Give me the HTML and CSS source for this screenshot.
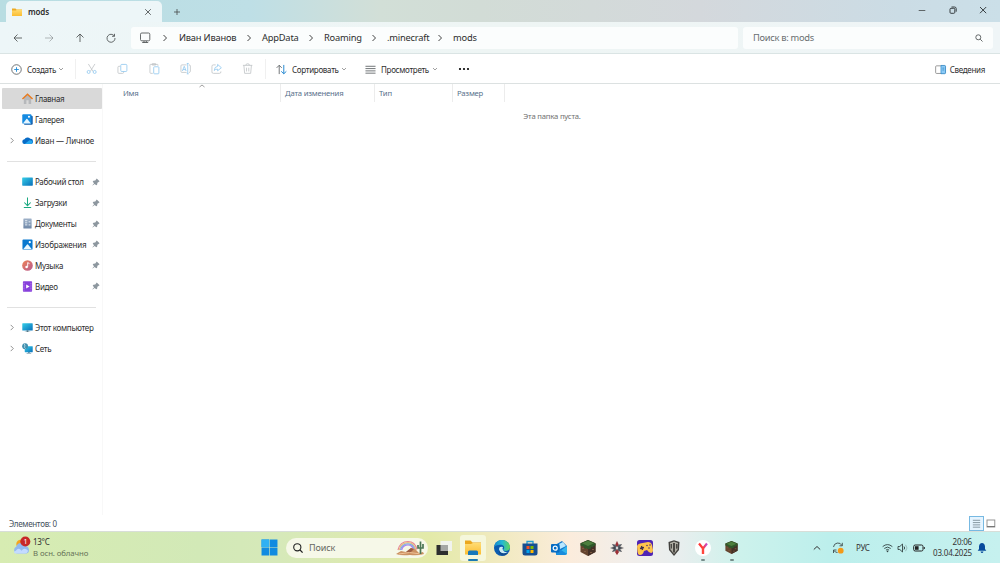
FILE: index.html
```html
<!DOCTYPE html>
<html lang="ru">
<head>
<meta charset="utf-8">
<title>mods</title>
<link rel="stylesheet" href="styles.css">
</head>
<body>
<svg width="0" height="0" class="defs">
  <defs>
    <linearGradient id="blue" x1="0" y1="0" x2="1" y2="1"><stop offset="0" stop-color="#36cfe8"/><stop offset="1" stop-color="#086fba"/></linearGradient>
    <linearGradient id="folder" x1="0" y1="0" x2="0" y2="1"><stop offset="0" stop-color="#ffdc73"/><stop offset="1" stop-color="#fbbd32"/></linearGradient>
    <linearGradient id="doc" x1="0" y1="0" x2="0" y2="1"><stop offset="0" stop-color="#9fb2c9"/><stop offset="1" stop-color="#6f88a8"/></linearGradient>
    <linearGradient id="music" x1="0" y1="0" x2="1" y2="1"><stop offset="0" stop-color="#ef8354"/><stop offset="1" stop-color="#b75b91"/></linearGradient>
    <linearGradient id="edge" x1="0" y1="0" x2="1" y2="0"><stop offset="0" stop-color="#1389ce"/><stop offset=".5" stop-color="#25b8d4"/><stop offset="1" stop-color="#61d657"/></linearGradient>
    <linearGradient id="ya" x1="0" y1="0" x2="1" y2="0"><stop offset="0" stop-color="#ff3434"/><stop offset=".5" stop-color="#ff3e38"/><stop offset="1" stop-color="#c14cd8"/></linearGradient>
    <symbol id="chev" viewBox="0 0 6 8"><path d="M1.500 1 4.500 4 1.500 7" fill="none" stroke="currentColor" stroke-width=".9"/></symbol>
    <symbol id="down" viewBox="0 0 6 4"><path d="M1 1 3 3 5 1" fill="none" stroke="currentColor" stroke-width=".7"/></symbol>
    <symbol id="pin" viewBox="0 0 8 8"><path d="M4.700.5 7.600 3.300l-1 .8-1.200.7-.3 1.900-.9.600-1.500-1.400L.6 7.600l-.2-.4 1.700-2L.7 3.700l.7-.9 1.900-.2z" fill="#8d979f"/></symbol>
    <symbol id="pic" viewBox="0 0 12 12"><rect x=".5" y=".5" width="11" height="11" rx="1" fill="#0878cf"/><path d="m1.500 11 4-5q.5-.6 1 0l4 5z" fill="#e9f8ff"/><circle cx="8.500" cy="3.500" r="1.200" fill="#fff"/></symbol>
    <symbol id="block" viewBox="0 0 16 16"><path d="m8 0 7.500 3.200v8.700L8 16 .5 11.900V3.200z" fill="#65442f"/><path d="M8 7.500V16l7.500-4.100V4z" fill="#443027"/><path d="m8 0 7.500 3.200v2L13 6.500v1l-2-.7v1.600L8 9.200 6 8v1L4 7.700V6.800L.5 5.400V3.200z" fill="#30572a"/><path d="m8 .8 6 2.500L8 6.100 2 3.300z" fill="#4c7e3d"/><path d="M2 8h2v1H2zm2 3h2v1H4zm6 1h2v1h-2zm2-3h2v1h-2z" fill="#7e5941"/></symbol>
  </defs>
</svg>
<div class="window">
  <header class="titlebar">
    <div class="tab">
      <svg class="tab-folder" viewBox="0 0 12 10"><path d="M1 1.500h3.500l1 1H11V9H1z" fill="#eda923"/><path d="M1 3.500h4l1-1h5V9H1z" fill="url(#folder)"/></svg>
      <span class="tab-title">mods</span>
      <svg class="tab-close" viewBox="0 0 8 8"><path d="m1.200 1.200 5.600 5.600m0-5.600L1.200 6.800" class="line"/></svg>
    </div>
    <svg class="plus" viewBox="0 0 8 8"><path d="M4 1v6M1 4h6" class="line"/></svg>
    <div class="controls">
      <svg viewBox="0 0 10 10"><path d="M1.700 5.500h6.600" class="line"/></svg>
      <svg viewBox="0 0 10 10"><rect x="2" y="3.300" width="4.800" height="5" rx="1" class="dark"/><path d="M3.500 2h3q1.700 0 1.700 1.700v3" class="dark"/></svg>
      <svg viewBox="0 0 10 10"><path d="m2 2 6.200 6.200m0-6.200L2 8.200" class="dark"/></svg>
    </div>
  </header>

  <div class="address">
    <nav class="navbuttons">
      <svg viewBox="0 0 10 10"><path d="M9 5H1m3.500-3.500L1 5l3.500 3.500" class="line"/></svg>
      <svg class="faded" viewBox="0 0 10 10"><path d="M1 5h8M5.500 1.500 9 5 5.500 8.500" class="line"/></svg>
      <svg viewBox="0 0 10 10"><path d="M5 9V1M1.500 4.500 5 1l3.500 3.500" class="line"/></svg>
      <svg viewBox="0 0 10 10"><path d="M8.300 3A4 4 0 1 0 9 5M8.500.8v2.500H6" class="line"/></svg>
    </nav>
    <div class="crumbs">
      <svg class="monitor" viewBox="0 0 12 12"><rect x="1.500" y="1" width="9.300" height="7.800" rx="1.300" class="line"/><path d="M3.200 10.500h6M5 9v1.500M7.300 9v1.500" class="line"/></svg>
      <svg class="chev c1"><use href="#chev"/></svg><span class="w-ivan">Иван Иванов</span>
      <svg class="chev"><use href="#chev"/></svg><span class="w-app">AppData</span>
      <svg class="chev"><use href="#chev"/></svg><span class="w-roam">Roaming</span>
      <svg class="chev"><use href="#chev"/></svg><span class="w-mine">.minecraft</span>
      <svg class="chev"><use href="#chev"/></svg><span>mods</span>
    </div>
    <div class="search"><span>Поиск в: mods</span><svg viewBox="0 0 8 8"><circle cx="3.300" cy="3.300" r="2.500" class="line"/><path d="m5.200 5.200 2.300 2.300" class="line"/></svg></div>
  </div>

  <div class="toolbar">
    <div class="tool create"><svg class="i11" viewBox="0 0 12 12"><circle cx="6" cy="6" r="5.200" class="line"/><path d="M6 3.500v5M3.500 6h5" stroke="#218bd5" fill="none"/></svg><span>Создать</span><svg class="down"><use href="#down"/></svg></div>
    <div class="actions">
      <svg viewBox="0 0 12 12"><path d="m2.500 1 5 8M9.500 1l-5 8" class="grayline"/><circle cx="2.800" cy="9.500" r="1.600" class="blueline"/><circle cx="9.200" cy="9.500" r="1.600" class="blueline"/></svg>
      <svg viewBox="0 0 12 12"><path d="M3.500 3.500H2q-1 0-1 1V10q0 1 1 1h4q1 0 1-1V9" class="grayline"/><rect x="4" y="1.500" width="6.500" height="7.500" rx="1" class="blueline"/></svg>
      <svg viewBox="0 0 12 12"><path d="M4 11H2q-1 0-1-1V2q0-.5.500-.5H9q.500 0 .5.500v1M3.500.7H7v1.500H3.500z" class="grayline"/><rect x="5" y="4" width="5.500" height="7.500" rx=".8" class="blueline"/></svg>
      <svg viewBox="0 0 12 12"><path d="M7 2H2Q1 2 1 3v6q0 1 1 1h5M9.500 2q1.500 0 1.500 1v6q0 1-1.500 1" class="grayline"/><path d="m2.500 8.500 2-5 2 5M3.200 7h2.600M8.200.5v11M7.200.5h2M7.200 11.500h2" class="blueline"/></svg>
      <svg viewBox="0 0 12 12"><path d="M5 2H2.500Q1 2 1 3.500v6Q1 11 2.500 11H9q1.500 0 1.500-1.500V9" class="grayline"/><path d="M7 1.500 11 5 7 8.300V6.500Q4.500 6.500 3.500 8 3.500 4 7 3.500z" class="blueline"/></svg>
      <svg viewBox="0 0 12 12"><path d="M1 2.500h10M4 2.500Q4 .8 6 .8t2 1.700M2 2.500l.8 8.500h6.400l.8-8.500M4.800 5v4M7.200 5v4" class="grayline"/></svg>
    </div>
    <div class="tool sort"><svg class="i11" viewBox="0 0 12 12"><path d="M3.500 11V1.500M.7 4.200l2.800-2.800 2.800 2.800" class="line"/><path d="M8.500 1v9.500M5.700 8l2.800 2.700L11.300 8" stroke="#1680ce" fill="none"/></svg><span>Сортировать</span><svg class="down"><use href="#down"/></svg></div>
    <div class="tool view"><svg class="i11" viewBox="0 0 12 12"><path d="M.5 2.500h11M.5 5h11M.5 7.500h11M.5 10h11" class="line"/></svg><span>Просмотреть</span><svg class="down"><use href="#down"/></svg></div>
    <svg class="more" viewBox="0 0 12 4"><circle cx="2" cy="2" r="1.100"/><circle cx="6" cy="2" r="1.100"/><circle cx="10" cy="2" r="1.100"/></svg>
    <div class="tool details"><svg class="i11" viewBox="0 0 12 12"><rect x=".7" y="2" width="10.600" height="8.300" rx="1" fill="#fff" stroke="#777" stroke-width=".8"/><path d="M6.500 1.600h4q1 0 1 1v7q0 1-1 1h-4z" fill="#8bcaf6" stroke="#1d80c7" stroke-width=".7"/><path d="M8 4.500h2M8 6.500h2" stroke="#287fb8" stroke-width=".7"/></svg><span>Сведения</span></div>
  </div>

  <div class="main">
    <aside class="sidebar">
      <div class="side selected"><svg class="arrow"></svg><svg class="sic" viewBox="0 0 12 12"><path d="M2 5v7h2.800V8h2.400v4H10V5L6 1.500z" fill="#b6b8bb"/><path d="m.5 6.500 5.500-5.200 5.500 5.200" fill="none" stroke="#e87b20" stroke-width="1.600"/></svg><span>Главная</span></div>
      <div class="side"><svg class="arrow"></svg><svg class="sic" viewBox="0 0 12 12"><rect x="2" y="1.800" width="9.700" height="10" rx="1.200" fill="#155ba5"/><rect x=".3" y=".3" width="10" height="10.300" rx="1" fill="#168be1"/><path d="m1 10.300 3.800-4.800q.5-.5 1 0l3.900 4.800z" fill="#e6f6ff"/><circle cx="7.600" cy="3" r="1.100" fill="#fff"/></svg><span>Галерея</span></div>
      <div class="side"><svg class="arrow"><use href="#chev"/></svg><svg class="sic" viewBox="0 0 12 12"><path d="M3 9.800a2.500 2.500 0 0 1-.3-5.100A3.800 3.800 0 0 1 9 4.200a2.800 2.800 0 0 1 .5 5.600z" fill="#086bc6"/><path d="M3 9.800 8 5.800q3-.7 3.700 1.700-.2 2.300-2.200 2.300z" fill="#28a8ef"/></svg><span class="personal">Иван — Личное</span></div>
      <hr>
      <div class="side"><svg class="arrow"></svg><svg class="sic" viewBox="0 0 12 12"><rect x=".2" y="1.500" width="11.600" height="9" rx=".6" fill="url(#blue)"/></svg><span>Рабочий стол</span><svg class="pin"><use href="#pin"/></svg></div>
      <div class="side"><svg class="arrow"></svg><svg class="sic" viewBox="0 0 12 12"><path d="M6 .5v9M2.500 6 6 9.500 9.500 6M2 11.500h8" fill="none" stroke="#1aa980" stroke-width="1.100"/></svg><span>Загрузки</span><svg class="pin"><use href="#pin"/></svg></div>
      <div class="side"><svg class="arrow"></svg><svg class="sic" viewBox="0 0 12 12"><rect x="1.500" y=".5" width="9" height="11" rx=".6" fill="url(#doc)"/><path d="M3.300 3h2.500M3.300 5.300h2.500M3.300 7.500h2.500M7.200 4.200h2M7.200 7.500h2" stroke="#eef4fb"/></svg><span>Документы</span><svg class="pin"><use href="#pin"/></svg></div>
      <div class="side"><svg class="arrow"></svg><svg class="sic"><use href="#pic"/></svg><span class="images">Изображения</span><svg class="pin"><use href="#pin"/></svg></div>
      <div class="side"><svg class="arrow"></svg><svg class="sic" viewBox="0 0 12 12"><circle cx="6" cy="6" r="5.800" fill="url(#music)"/><path d="M6.200 7.500V2.800l2 1.200" fill="none" stroke="#fff"/><circle cx="5" cy="7.700" r="1.400" fill="#fff"/></svg><span>Музыка</span><svg class="pin"><use href="#pin"/></svg></div>
      <div class="side"><svg class="arrow"></svg><svg class="sic" viewBox="0 0 12 12"><rect x="1" y=".4" width="10" height="11.200" rx=".8" fill="#8740db"/><path d="m4.600 3.700 3.700 2.300-3.700 2.300z" fill="#fff"/><path d="M2.200 2v8.500M9.800 2v8.500" stroke="#c99bf7" stroke-dasharray="1 1"/></svg><span>Видео</span><svg class="pin"><use href="#pin"/></svg></div>
      <hr>
      <div class="side"><svg class="arrow"><use href="#chev"/></svg><svg class="sic" viewBox="0 0 12 12"><rect x=".3" y="1.300" width="11.400" height="8" rx=".6" fill="url(#blue)"/><path d="M5 9h2v1.500h2v.5H3v-.5h2z" fill="#557b8c"/></svg><span class="pc">Этот компьютер</span></div>
      <div class="side"><svg class="arrow"><use href="#chev"/></svg><svg class="sic" viewBox="0 0 12 12"><rect x="3" y="3.500" width="8.700" height="6.500" rx=".4" fill="url(#blue)"/><path d="M6.500 10h2v1h1.500v.5H5V11h1.500z" fill="#477891"/><circle cx="3.400" cy="3.500" r="3.200" fill="#418fae"/><path d="M2 1q2 1 1 2.500T4 6" fill="none" stroke="#b8dae4"/></svg><span>Сеть</span></div>
    </aside>
    <section class="files">
      <div class="columns"><div class="col name">Имя<svg class="sortmark" viewBox="0 0 6 4"><path d="m.5 3 2.500-2 2.500 2" fill="none" stroke="#777" stroke-width=".7"/></svg></div><div class="col date">Дата изменения</div><div class="col type">Тип</div><div class="col size">Размер</div></div>
      <p class="empty">Эта папка пуста.</p>
    </section>
  </div>
  <footer class="status"><span>Элементов: 0</span><div class="modes"><div class="mode active"><svg viewBox="0 0 12 12"><path d="M2 2.500h8M2 5h8M2 7.500h8M2 10h8" stroke="#667782" stroke-width=".8"/></svg></div><svg class="large" viewBox="0 0 10 10"><rect x="1" y="1" width="7.800" height="7" fill="#fff" stroke="#8b8b8b" stroke-width=".9"/><path d="M1 7.500h8" stroke="#777"/></svg></div></footer>
</div>

<div class="taskbar">
  <div class="weather"><svg viewBox="0 0 20 20"><circle cx="9" cy="8" r="4.500" fill="#f5a51d"/><path d="M5 18a4 4 0 0 1-.4-7.500A5 5 0 0 1 14 10a4.100 4.100 0 0 1 1 8z" fill="#91b9ef"/><path d="M4 15q3-4 6 0 3-4 7 0-1 3-3 3H5q-3 0-3-2z" fill="#c3dbff"/><circle cx="14" cy="5.200" r="5.300" fill="#c72828"/><text x="14" y="8" text-anchor="middle" fill="#fff" font-size="7.500">1</text></svg><div><b>13°C</b><span>В осн. облачно</span></div></div>
  <div class="apps">
    <svg class="start" viewBox="0 0 16 16"><path d="M.5.500h7.200v7.200H.5zM8.300.500h7.200v7.200H8.300zM.5 8.300h7.200v7.200H.5zM8.300 8.300h7.200v7.200H8.300z" fill="#108be0"/><path d="M.5.500h7.200v7.200H.5z" fill="#2eb1f3"/></svg>
    <div class="tasksearch"><svg viewBox="0 0 10 10"><circle cx="4.300" cy="4.300" r="3.600" fill="none" stroke="#222" stroke-width="1.100"/><path d="m6.800 6.800 2.800 2.800" stroke="#222" stroke-width="1.300"/></svg><span>Поиск</span><svg class="rainbow" viewBox="0 0 30 18"><g fill="none" stroke-width="1.200"><path d="M3 11Q5 2.500 13 2.500q7 0 9 8" stroke="#e78594"/><path d="M4.200 11Q6 3.700 13 3.700q6 0 8 8" stroke="#e7bd7d"/><path d="M5.400 11Q7 4.900 13 4.900q5.500 0 7 7" stroke="#79afe9"/><path d="M6.600 11Q8 6 13 6q4.500 0 6 6" stroke="#a67ded"/></g><path d="M1 15 6 12l5 1 5-4 4 1 4 4 4-1 1 2q-6 2-14 1-9 1-14-1z" fill="#cc9262"/><path d="m11 13 5-4 3 1-4 4z" fill="#9b5d43"/><path d="M4 15q10-3 22 0" fill="none" stroke="#efc298"/><path d="M25.500 15V2.500M23 6v3h2.500M28 5v4h-2.500" fill="none" stroke="#4a7654" stroke-width="1.700"/></svg></div>
    <div class="slot"><svg viewBox="0 0 16 16"><path d="M4.500 1H16v10H4.500z" fill="#f1f3ee"/><path d="M.5 5H12v10H.5z" fill="#2c2e2e"/><path d="M4.500 5H12v6H4.500z" fill="#a5a7a5"/></svg></div>
    <div class="slot current"><svg viewBox="0 0 16 16"><path d="M0 .5h5.500l2 2H16V14H0z" fill="#eba71e"/><path d="M0 4h6l2-1h8v11.500H0z" fill="url(#folder)"/><path d="M3 12q0-1.500 1.500-1.500h7Q13 10.500 13 12v3H3z" fill="#1678ba"/></svg><i></i></div>
    <div class="slot"><svg viewBox="0 0 16 16"><circle cx="8" cy="8" r="8" fill="#0b5caf"/><path d="M.2 7C1 2 4 0 8 0c5 0 8 4 8 7 0 4-5 5-7 3 3-3 0-6-4-5-3 0-4 1-4.800 2z" fill="url(#edge)"/><path d="M9 10q-1-1 0-3-4-1-4 2c0 4 5 6 9 3-2 .5-4 0-5-2z" fill="#c9eaf2"/><path d="M5 9c0 4 5 6 9 3-2 5-7 4-9 1z" fill="#114b8f"/></svg></div>
    <div class="slot"><svg viewBox="0 0 16 16"><path d="M5 4V1.500h6V4" fill="none" stroke="#229bd1" stroke-width="1.300"/><path d="M.5 3.500h15V13q0 2.500-2.500 2.500H3Q.5 15.500.5 13z" fill="#164f91"/><path d="M4.500 6h3v3h-3z" fill="#f25022"/><path d="M8.500 6h3v3h-3z" fill="#7fba00"/><path d="M4.500 10h3v3h-3z" fill="#00a4ef"/><path d="M8.500 10h3v3h-3z" fill="#ffb900"/></svg></div>
    <div class="slot"><svg viewBox="0 0 16 16"><path d="m4 5 7-4 5 5v8H5z" fill="#1476cb"/><path d="m8 4 4-2 3 4-6 3z" fill="#b8e7ff"/><path d="m5 14 11-8v7q0 2-2 2H5z" fill="#32b5ed"/><path d="m7 8 9 6-2 1H5z" fill="#198cdc"/><rect y="4" width="8.500" height="8.500" rx="1" fill="#086dc3"/><circle cx="4.200" cy="8.200" r="2" fill="none" stroke="#fff" stroke-width="1.200"/></svg></div>
    <div class="slot"><svg><use href="#block"/></svg></div>
    <div class="slot"><svg viewBox="0 0 16 16"><path d="m8 1 1.800 3L13 4l-1 2.500L15 8l-3 1.500L13 12l-3-.5L8 15l-1.800-3.500L3 12l1-2.500L1 8l3-1.500L3 4l3.200 0z" fill="#c6bdb8"/><path d="m8 1 1.700 4L8 7 6.300 5zM8 15l-2-3 2-3 2 3z" fill="#9d3037"/><path d="m3 4 3.500 1L8 7l1.500-2L13 4l-2 3 2 1-2 1 2 3-3.500-1L8 9l-1.500 2L3 12l2-3-2-1 2-1z" fill="#555b65"/><path d="m1 8 3-.5h8l3 .5-3 .6H4z" fill="#303740"/><circle cx="8" cy="8" r="1.300" fill="#d5d5d5"/></svg></div>
    <div class="slot"><svg viewBox="0 0 16 16"><rect width="16" height="16" rx="2.500" fill="#4f24b5"/><path d="M0 6q.5-2 3-2.500L11 2q3 0 4 3l1 5q0 3-2 3t-4-3l-3 1q-1 4-4 4-2 0-2.500-3z" fill="#ffc54b"/><path d="M3 8.500 7 7.500M4.500 6l1 4" stroke="#3d2e4d" stroke-width="1.400"/><circle cx="10" cy="5.500" r=".8" fill="#533672"/><circle cx="13" cy="5" r=".8" fill="#533672"/><circle cx="12" cy="8" r=".8" fill="#533672"/></svg></div>
    <div class="slot"><svg viewBox="0 0 16 16"><path d="M8 .3 13.500 2 13 10l-5 6-5-6-.5-8z" fill="#42413e"/><path d="M8 1.500 12 3l-.5 6.500L8 14 4.500 9.500 4 3z" fill="#b0aea4"/><path d="M7 3h2v9l-1 1-1-1zM4.500 4H6v5l-1-1zm5.500 0h1.500v4l-1.500 1z" fill="#494743"/></svg></div>
    <div class="slot running"><svg viewBox="0 0 16 16"><circle cx="8" cy="8" r="8" fill="#fff"/><path d="m4 3.500 4 5 4-5M8 8.300V14" fill="none" stroke="url(#ya)" stroke-width="2.200"/><path d="M8 8V14" stroke="#ff463c" stroke-width="2.200"/></svg><i></i></div>
    <div class="slot running small"><svg><use href="#block"/></svg><i></i></div>
  </div>
  <div class="tray">
    <svg class="up" viewBox="0 0 8 8"><path d="m.8 5.500 3.200-3 3.200 3" fill="none" stroke="#333"/></svg>
    <svg class="sync" viewBox="0 0 12 12"><path d="M1.500 5A4.500 4.500 0 0 1 10 3.500M10.300.8v3H7.500M1.500 11V8h3M2 8.500q1 2 3.500 2" fill="none" stroke="#3d4c4c" stroke-width=".9"/><circle cx="8.700" cy="8.700" r="2.900" fill="#f49a18"/></svg>
    <span class="lang">РУС</span>
    <svg class="wifi" viewBox="0 0 12 10"><path d="M.7 3.500q5.300-4.500 10.600 0M2.500 5.500q3.500-3 7 0M4.300 7.300q1.700-1.500 3.400 0" fill="none" stroke="#344"/><circle cx="6" cy="8.700" r=".9" fill="#344"/></svg>
    <svg class="sound" viewBox="0 0 12 10"><path d="M1 3.500h1.800L5.500 1v8L2.800 6.500H1z" fill="none" stroke="#344" stroke-width=".9"/><path d="M7 3.500q1.200 1.500 0 3" fill="none" stroke="#344"/><path d="M8.500 1.800q3 3.200 0 6.400" fill="none" stroke="#9bbdbc"/></svg>
    <svg class="battery" viewBox="0 0 12 10"><rect x=".7" y="2" width="9.300" height="6" rx="1.500" fill="none" stroke="#222"/><path d="M2 3.200h3.600v3.600H2z" fill="#222"/><path d="M11.300 4v2" stroke="#222"/></svg>
    <div class="clock"><span>20:06</span><span class="fulldate">03.04.2025</span></div>
    <svg class="bell" viewBox="0 0 10 12"><path d="M.7 8.800 2 7V4.500Q2.300 1 5 1t3 3.500V7l1.300 1.800z" fill="#064a9c"/><path d="M3.500 9.500h3Q6 11 5 11T3.500 9.500" fill="#064a9c"/></svg>
  </div>
</div>
</body>
</html>
```

FILE: styles.css
```css
* { box-sizing: border-box; }
body { margin: 0; width: 1000px; height: 563px; overflow: hidden; display: flex; flex-direction: column; font-family: "Noto Sans", "Open Sans", sans-serif; font-size: 8px; letter-spacing: -.3px; color: #2d2d2d; background: #fff; }
svg { display: block; flex: none; overflow: visible; }
span { white-space: nowrap; }
.defs { position: absolute; }
.line { fill: none; stroke: #4b5052; stroke-width: .85; }
.dark { fill: none; stroke: #30373a; stroke-width: .95; }
.grayline { fill: none; stroke: #bfc3c5; stroke-width: .85; }
.blueline { fill: none; stroke: #94caef; stroke-width: .9; }
.window { height: 532px; display: flex; flex-direction: column; }

.titlebar { height: 22px; display: flex; align-items: center; background: linear-gradient(90deg, #b8dde2 0%, #bedfe6 25%, #d2dfd7 38%, #d2dcd6 48%, #d4d8dc 70%, #cbdce5 90%, #cbdfe8 100%); }
.tab { width: 156px; height: 21px; margin: 1px 0 0 6px; padding: 0 10px 0 5px; display: flex; align-items: center; border-radius: 5px 5px 0 0; background: #edf6f8; }
.tab-folder { width: 12px; height: 10px; }
.tab-title { margin-left: 5px; font-size: 8px; font-weight: 600; letter-spacing: -.15px; }
.tab-close { width: 8px; height: 8px; margin-left: auto; }
.plus { width: 8px; height: 8px; margin: 2px 0 0 11px; }
.controls { margin: -3px 12px 0 auto; display: flex; gap: 20.500px; }
.controls svg { width: 10px; height: 10px; }

.address { height: 32px; display: flex; align-items: center; border-bottom: 1px solid #dae4e4; background: linear-gradient(90deg, #edf6f8, #eef5f4 50%, #eff5f7); }
.navbuttons { width: 131px; padding-left: 13px; display: flex; gap: 21px; }
.navbuttons svg { width: 10px; height: 10px; }
.faded { opacity: .45; }
.crumbs { width: 607px; height: 22px; padding-left: 8px; display: flex; align-items: center; border-radius: 3px; background: #fbfdfd; font-size: 9.300px; letter-spacing: -.2px; }
.monitor { width: 12px; height: 12px; }
.chev { width: 6px; height: 8px; margin: 0 10px; }
.c1 { margin: 0 11px; }
.w-ivan { width: 57px; }
.w-app { width: 36px; }
.w-roam { width: 37px; }
.w-mine { width: 40px; }
.search { width: 250px; height: 22px; margin-left: 5px; padding: 0 10px; display: flex; align-items: center; justify-content: space-between; border-radius: 3px; background: #fbfdfd; color: #696e70; font-size: 9.300px; letter-spacing: -.3px; }
.search svg { width: 8px; height: 8px; }

.toolbar { height: 30px; padding-top: 1px; display: flex; align-items: center; border-bottom: 1px solid #dce1e1; }
.tool { display: flex; align-items: center; }
.i11 { width: 11px; height: 11px; margin-right: 5px; }
.down { width: 6px; height: 4px; margin-left: auto; color: #777; }
.create { width: 76px; height: 20px; padding: 0 11px; border-right: 1px solid #f0f0f0; }
.actions { width: 190px; height: 20px; padding-left: 10px; display: flex; align-items: center; gap: 20px; border-right: 1px solid #f0f0f0; }
.actions svg { width: 11.300px; height: 11.300px; }
.sort { width: 71px; margin-left: 10px; }
.view { width: 73px; margin-left: 18px; }
.more { width: 12px; height: 4px; margin-left: 20px; }
.details { margin-left: auto; padding-right: 15px; }
.details .i11 { margin-right: 4px; }

.main { height: 431px; display: flex; }
.sidebar { width: 103px; padding: 4px 0 0 2px; border-right: 1px solid #f8f8f8; }
.side { width: 99.500px; height: 20.860px; padding: 0 1.500px 0 6px; display: flex; align-items: center; border-radius: 1px; }
.selected { background: #d9d9d9; }
.arrow { width: 8px; height: 7px; color: #777; }
.sic { width: 11px; height: 11px; margin: 0 2px 0 6px; }
.pin { width: 8px; height: 8px; margin-left: auto; }
.personal, .images { letter-spacing: -.18px; }
hr { width: 89px; height: 1px; margin: 10px 0 9.860px 5px; border: 0; background: #e1e1e1; }
.files { width: 897px; }
.columns { height: 18px; display: flex; color: #58708b; font-size: 7.700px; letter-spacing: -.2px; }
.col { height: 18px; border-right: 1px solid #ececec; line-height: 18px; padding-left: 4px; }
.name { width: 178px; padding-left: 20px; display: flex; }
.sortmark { width: 6px; height: 4px; margin-left: 60px; }
.date { width: 94px; }
.type { width: 78px; }
.size { width: 52px; }
.empty { width: 898px; margin: 9px 0 0; color: #707070; font-size: 7.700px; letter-spacing: -.2px; line-height: 11px; text-align: center; }
.status { height: 17px; padding: 1px 4px 0 9px; display: flex; align-items: center; justify-content: space-between; border-bottom: 1px solid #d8ded8; color: #43505c; }
.modes { display: flex; align-items: center; gap: 2px; }
.mode { width: 15px; height: 15px; padding: 1px; border: 1px solid #77b9e2; background: #e5f4ff; }
.mode svg { width: 11px; height: 11px; }
.large { width: 10px; height: 10px; margin-top: 1px; }

.taskbar { height: 31px; display: flex; align-items: center; background: linear-gradient(90deg, #d7ecb2 0%, #d2e9b7 20%, #d6e9b9 28%, #e3eaa9 43%, #f1eac0 50%, #fbecdc 57%, #f1eeeb 63%, #e8eeee 68%, #cdf2ec 74%, #bcefec 83%, #c6f1ef 100%); }
.weather { width: 261px; padding-left: 12px; display: flex; align-items: center; gap: 2px; }
.weather svg { width: 19px; height: 20px; margin-top: -3px; }
.weather div { display: flex; flex-direction: column; line-height: 10.500px; }
.weather b { font-size: 8px; font-weight: 400; }
.weather span { color: #677258; font-size: 7.800px; letter-spacing: -.1px; }
.apps { display: flex; align-items: center; }
.start { width: 17px; height: 17px; margin-right: 8px; }
.tasksearch { width: 142px; height: 20px; padding: 0 3px 0 7px; display: flex; align-items: center; border-radius: 11px; background: #f6f8e8; color: #656760; font-size: 9px; letter-spacing: -.1px; }
.tasksearch svg { width: 10px; height: 10px; margin-right: 6px; }
.tasksearch .rainbow { width: 30px; height: 18px; margin: 0 0 0 auto; }
.slot { width: 26px; height: 26px; margin-left: 2.750px; display: flex; align-items: center; justify-content: center; position: relative; border-radius: 3px; }
.slot:nth-child(3) { margin-left: 3px; }
.slot svg { width: 16px; height: 16px; }
.current { background: #f5f7dc; }
.slot i { position: absolute; bottom: 0; left: 11px; width: 4px; height: 2px; border-radius: 1px; background: #768c8a; }
.current i { left: 8px; width: 10px; background: #1979b2; }
.small svg { width: 13px; height: 13px; }
.tray { margin-left: auto; padding-right: 13px; display: flex; align-items: center; color: #333; }
.up { width: 8px; height: 8px; }
.sync { width: 12px; height: 12px; margin-left: 11px; }
.lang { width: 15px; margin-left: 12px; }
.wifi { width: 11px; height: 10px; margin-left: 11px; }
.sound { width: 12px; height: 10px; margin-left: 4px; }
.battery { width: 12px; height: 10px; margin-left: 4px; }
.clock { width: 41px; margin-left: 6px; display: flex; flex-direction: column; align-items: flex-end; line-height: 10.500px; letter-spacing: -.2px; }
.bell { width: 10px; height: 12px; margin-left: 5px; }
```
